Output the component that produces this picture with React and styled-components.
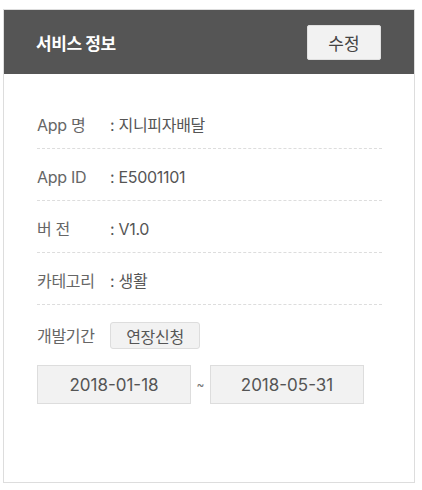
import styled, {createGlobalStyle} from "styled-components"

const GlobalStyle = createGlobalStyle`
	body {
		margin: 0;
		background: #fff;
		font-family: Inter, "Noto Sans CJK KR", sans-serif;
	}
`

const rows = [
	{label: "App 명", value: "지니피자배달"},
	{label: "App ID", value: "E5001101"},
	{label: "버 전", value: "V1.0"},
	{label: "카테고리", value: "생활"},
]

const App = () => {
	return (
		<Page>
			<GlobalStyle />
			<Card>
				<Header>
					<Title>서비스 정보</Title>
					<EditButton type="button">수정</EditButton>
				</Header>
				<Body>
					{rows.map((r) => (
						<Row key={r.label}>
							<Label>{r.label}</Label>
							<Value>: {r.value}</Value>
						</Row>
					))}
					<PeriodRow>
						<Label>개발기간</Label>
						<SmallButton type="button">연장신청</SmallButton>
					</PeriodRow>
					<DateRow>
						<DateBox>2018-01-18</DateBox>
						<Tilde>~</Tilde>
						<DateBox>2018-05-31</DateBox>
					</DateRow>
				</Body>
			</Card>
		</Page>
	)
}

export default App

const Page = styled.div`
	padding: 9px 0 0 3px;
`

const Card = styled.div`
	width: 410px;
	height: 472px;
	border: 1px solid #dddddd;
	background: #fff;
	display: flex;
	flex-direction: column;
`

const Header = styled.div`
	height: 64px;
	background: #555555;
	display: flex;
	align-items: center;
	justify-content: space-between;
	padding: 0 33px 0 32px;
`

const Title = styled.div`
	color: #fff;
	font-size: 17px;
	font-weight: bold;
	letter-spacing: -0.4px;
`

const EditButton = styled.button`
	width: 74px;
	height: 35px;
	background: #f2f2f2;
	border: 1px solid #e0e0e0;
	border-radius: 2px;
	font-family: inherit;
	font-size: 17px;
	color: #444;
	padding: 0;
	margin-top: 1px;
`

const Body = styled.div`
	padding: 23px 32px 0 33px;
`

const Row = styled.div`
	display: flex;
	align-items: center;
	height: 52px;
	padding-top: 5px;
	box-sizing: border-box;
	border-bottom: 1px dashed #dddddd;
	font-size: 16px;
	line-height: 22px;
	letter-spacing: -0.3px;
`

const Label = styled.span`
	width: 73px;
	color: #666;
	font-size: 16px;
	flex-shrink: 0;
	letter-spacing: -0.3px;
`

const Value = styled.span`
	color: #555;
`

const PeriodRow = styled.div`
	display: flex;
	align-items: center;
	padding-top: 17px;
	font-size: 16px;
	line-height: 22px;
`

const SmallButton = styled.button`
	width: 90px;
	height: 27px;
	background: #f2f2f2;
	border: 1px solid #dddddd;
	border-radius: 3px;
	font-family: inherit;
	font-size: 16px;
	letter-spacing: -0.3px;
	color: #555;
	padding: 0;
`

const DateBox = styled.div`
	width: 152px;
	height: 37px;
	background: #f2f2f2;
	border: 1px solid #dddddd;
	display: flex;
	align-items: center;
	justify-content: center;
	font-size: 17px;
	color: #555;
`

const DateRow = styled.div`
	display: flex;
	align-items: center;
	margin-top: 16px;
`

const Tilde = styled.span`
	width: 19px;
	text-align: center;
	color: #777;
	font-size: 12px;
`
